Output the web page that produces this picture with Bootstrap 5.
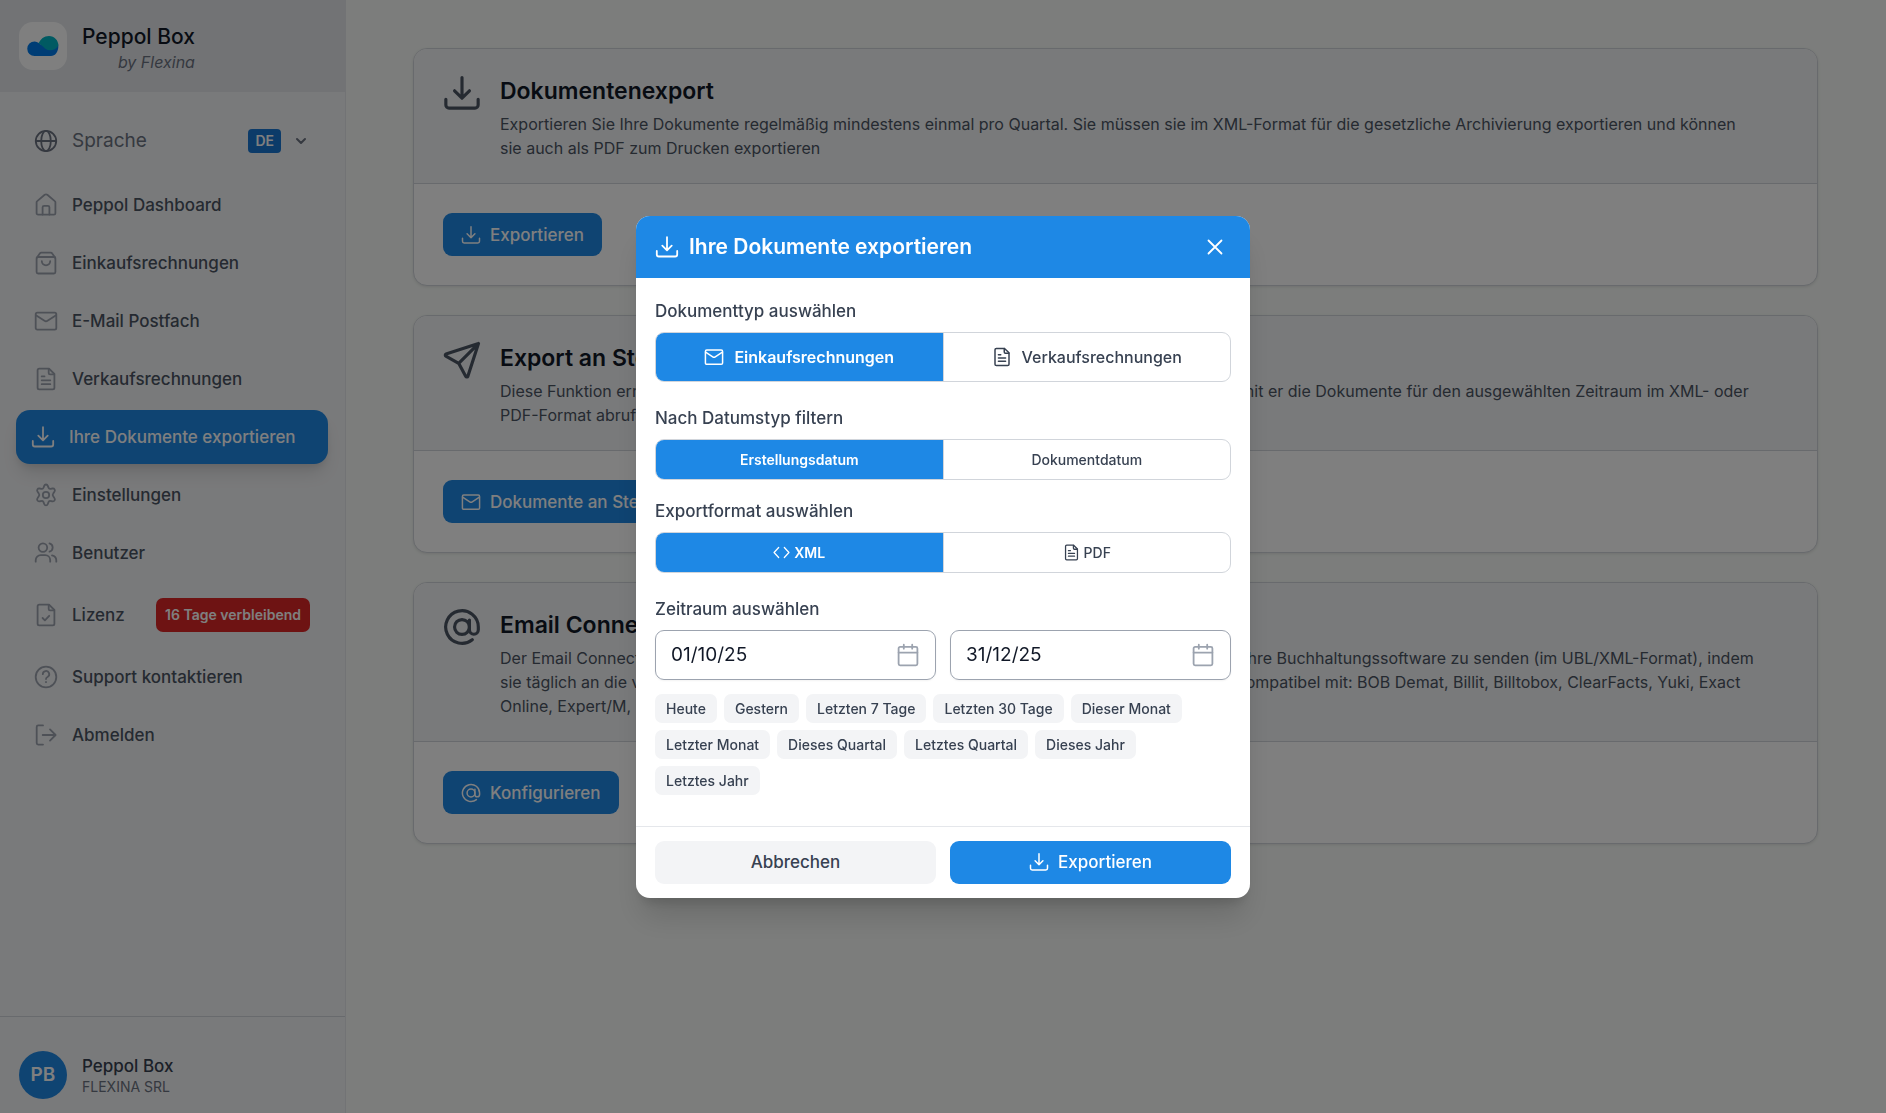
<!DOCTYPE html>
<html lang="de">
<head>
<meta charset="utf-8">
<meta name="viewport" content="width=device-width, initial-scale=1">
<title>Peppol Box</title>
<link href="https://cdn.jsdelivr.net/npm/bootstrap@5.3.0/dist/css/bootstrap.min.css" rel="stylesheet">
<style>
:root{--brand:#1e88e5;--ink:#111827;--g7:#374151;--g6:#4b5563;--g5:#6b7280;--g4:#9ca3af;--g3:#d1d5db;--g2:#e5e7eb;--g1:#f3f4f6}
body{font-family:Inter,sans-serif;font-size:17px;line-height:24px;background:#f8fbf8;color:var(--g6)}
svg{flex:none;fill:none;stroke:currentColor;stroke-width:1.8;stroke-linecap:round;stroke-linejoin:round}
.i16{width:17px;height:17px}.i18{width:20px;height:20px}.i24{width:24px;height:24px}.i38{width:38px;height:38px;stroke-width:2}
.side{width:346px;background:var(--g1);border-right:1px solid var(--g2)}
.side-head{background:var(--g2);height:92px;padding:0 19px;gap:15px}
.logo{width:48px;height:48px;border-radius:14px;background:#fff}
.logo svg{width:32px;height:22px;stroke:none}
.brand-name{font-size:21px;line-height:28px;font-weight:500;color:var(--ink)}
.by{color:var(--g5);font-size:16px;line-height:22px}
.lang{height:53px;padding:0 36px 0 34px;margin-top:22px;font-size:19px;color:var(--g5);background:none;border:0;gap:12px}
.lang-name{padding-left:2px}
.lang-code{background:#1976d2;color:#fff;font-size:14px;line-height:24px;font-weight:600;border-radius:4px;padding:0 7px}
.chev{width:16px;height:16px;stroke-width:3}
.menu{padding:11px 17px 11px 16px;gap:4px}
.menu .nav-link{height:54px;padding:0 18px;gap:14px;color:var(--g6);font-weight:500;border-radius:14px}
.menu svg{color:var(--g4)}
.menu .nav-link.active{background:var(--brand);color:#fff;padding:0 15px;box-shadow:0 12px 18px -4px rgba(0,0,0,.12),0 5px 7px -2px rgba(0,0,0,.08)}
.menu .active svg{color:#fff}
.menu .nav-link.tall{height:62px}
.days{background:#dc2626;color:#fff;font-size:14px;font-weight:600;line-height:24px;padding:5px 9px;border-radius:7px}
.side-foot{border-top:1px solid var(--g3);padding:34px 19px 14px;gap:15px}
.avatar{width:48px;height:48px;background:var(--brand);color:#fff;font-weight:600;font-size:19px}
.user{color:var(--g7);font-weight:500;line-height:22px}
.org{color:var(--g5);font-size:14px;line-height:19px}
main{padding:48px 68px 29px 67px;gap:29px}
.panel{border:1px solid var(--g3);border-radius:14px;box-shadow:0 1px 3px rgba(0,0,0,.1);overflow:hidden}
.panel-top{background:var(--g1);border-bottom:1px solid var(--g3);padding:25px 58px 23px 29px;gap:19px;color:var(--g6)}
.panel-top h2{font-size:23px;line-height:34px;font-weight:600;color:var(--ink);margin:0 0 4px}
.panel-top p{font-size:16px;margin:0}
.panel-body{padding:29px}
.act{height:43px;border-radius:9px;font-size:17px;font-weight:500;padding:0 18px;gap:9px;line-height:24px;border:0}
.act-main,.act-main:hover{background:var(--brand);color:#fff}
.act-grey{background:var(--g1);color:var(--g7)}
.dlg{max-width:614px}
.dlg .modal-content{border:0;border-radius:14px;overflow:hidden;box-shadow:0 24px 30px -6px rgba(0,0,0,.14),0 10px 12px -6px rgba(0,0,0,.14);color:var(--g7)}
.dlg .modal-header{background:var(--brand);color:#fff;height:62px;padding:0 19px;border:0;border-radius:0}
.dlg-title{gap:10px}
.dlg h1{font-size:21px;line-height:32px;font-weight:600;margin:0}
.dlg .modal-body{padding:21px 19px 31px}
.dlg fieldset{margin-bottom:24px}
.dlg fieldset.near{margin-bottom:19px}
.dlg legend{font-size:17px;line-height:24px;font-weight:500;margin-bottom:9px;color:var(--g7)}
.seg{border:1px solid var(--g3);border-radius:9px;overflow:hidden}
.seg .btn{border:0;border-radius:0!important;font-size:14px;line-height:23px;font-weight:500;color:var(--g7);padding:8px 0;flex:1 1 0;margin:0!important;gap:4px}
.seg.big .btn{font-size:16px;line-height:24px;padding:12px 0;gap:10px}
.seg .btn+.btn-check+.btn{border-left:1px solid var(--g3)}
.seg .btn-check:checked+.btn{background:var(--brand);color:#fff;font-weight:600}
.pair{gap:14px}
.pair>*{flex:1 1 0;min-width:0}
.datebox{border:1px solid var(--g4);border-radius:9px;height:50px;padding:0 15px;color:var(--g4);box-shadow:0 1px 2px rgba(0,0,0,.05)}
.datebox .form-control{border:0;padding:0;font-size:19px;line-height:28px;color:var(--ink);background:none;min-width:0}
.chips{gap:7px;margin-top:14px}
.chips button{border:0;background:var(--g1);color:var(--g7);border-radius:7px;font-size:14px;font-weight:500;line-height:19px;padding:5px 11px}
.dlg .modal-footer{border-top:1px solid var(--g2);padding:14px 19px}
.dlg .modal-footer>*{margin:0}
</style>
</head>
<body>
<svg class="d-none">
<symbol id="down" viewBox="0 0 24 24"><path d="M12 2.200v13M7.300 10.600l4.700 4.700 4.700-4.700M1.800 16v3.500a2 2 0 0 0 2 2h16.400a2 2 0 0 0 2-2V16"/></symbol>
<symbol id="globe" viewBox="0 0 24 24"><circle cx="12" cy="12" r="10.200"/><ellipse cx="12" cy="12" rx="4.800" ry="10.200"/><path d="M1.800 12h20.400"/></symbol>
<symbol id="home" viewBox="0 0 24 24"><path d="M2.600 9.300c0-.5.200-.9.600-1.200l7.500-6.300c.8-.6 1.800-.6 2.600 0l7.500 6.300c.4.300.6.700.6 1.200v10.900c0 .8-.6 1.500-1.500 1.500H4.100c-.9 0-1.500-.7-1.500-1.500z"/><path d="M8.600 21.500v-7.200c0-.8.600-1.500 1.500-1.500h3.800c.9 0 1.500.7 1.500 1.500v7.200"/></symbol>
<symbol id="bag" viewBox="0 0 24 24"><rect x="2.600" y="6" width="18.800" height="16.500" rx="1.500"/><path d="M2.800 6.800l3-4.300a1.800 1.800 0 0 1 1.500-.8h9.400c.6 0 1.200.3 1.500.8l3 4.300M7.800 10.100a4.200 4.200 0 0 0 8.400 0"/></symbol>
<symbol id="mail" viewBox="0 0 24 24"><rect x="1.700" y="3.700" width="20.600" height="17" rx="1.600"/><path d="M1.900 6.200l8.600 5.600c1 .7 2 .7 3 0l8.600-5.600"/></symbol>
<symbol id="doc" viewBox="0 0 24 24"><path d="M15 1.700H5.200c-.9 0-1.600.7-1.600 1.600v17.400c0 .9.700 1.600 1.600 1.600h13.600c.9 0 1.600-.7 1.600-1.600V7z"/><path d="M14.700 1.900V6c0 .8.600 1.400 1.400 1.400h4.100M7.700 9.400h2.800M7.700 13.300h8.600M7.700 17.200h8.600"/></symbol>
<symbol id="docok" viewBox="0 0 24 24"><path d="M15 1.700H5.200c-.9 0-1.600.7-1.600 1.600v17.400c0 .9.700 1.600 1.600 1.600h13.600c.9 0 1.600-.7 1.600-1.600V7z"/><path d="M14.700 1.900V6c0 .8.600 1.400 1.400 1.400h4.100M8.600 15l2.300 2.300 4.300-4.500"/></symbol>
<symbol id="gear" viewBox="0 0 24 24"><circle cx="12" cy="12" r="3.200"/><path d="M10.200 2.900c.7-1.900 2.900-1.900 3.600 0l.7 1.800c.3.800 1.200 1.300 2 1.100l2-.3c1.900-.3 3.100 1.700 1.900 3.200l-1.200 1.800c-.6.800-.6 2 0 2.800l1.200 1.700c1.200 1.600 0 3.600-1.900 3.300l-2-.3c-.8-.2-1.700.3-2 1.100l-.7 1.900c-.7 1.900-2.900 1.900-3.600 0l-.7-1.900c-.3-.8-1.200-1.300-2-1.100l-2 .3c-1.900.3-3.100-1.700-1.900-3.300l1.200-1.700c.6-.8.600-2 0-2.800L3.600 8.700c-1.200-1.500 0-3.500 1.900-3.200l2 .3c.8.200 1.700-.3 2-1.100z"/></symbol>
<symbol id="users" viewBox="0 0 24 24"><circle cx="8.900" cy="6.600" r="4.300"/><path d="M1.700 20.700v-1.500a5 5 0 0 1 5-5h4.500a5 5 0 0 1 5 5v1.500M15.500 2.400a4.300 4.300 0 0 1 0 8.300M18 14.400c2.600.6 4.300 2.500 4.300 5v1.300"/></symbol>
<symbol id="help" viewBox="0 0 24 24"><circle cx="12" cy="12" r="10.300"/><path d="M8.800 9.200a3.200 3.200 0 1 1 4.700 2.800c-.9.500-1.500 1.100-1.500 2M12 16.900v.3"/></symbol>
<symbol id="exit" viewBox="0 0 24 24"><path d="M9 21.600H4.200a1.500 1.500 0 0 1-1.500-1.500V3.900a1.500 1.500 0 0 1 1.500-1.500H9M8.700 12h12.800M16 6.400l5.600 5.600-5.600 5.600"/></symbol>
<symbol id="plane" viewBox="0 0 24 24"><path d="M22.400 1.600L1.900 8.200c-.6.200-.6 1-.1 1.300l8.100 4.600 4.500 8.300c.3.500 1.100.4 1.300-.1zM22.400 1.600L9.900 14.100"/></symbol>
<symbol id="at" viewBox="0 0 24 24"><circle cx="12" cy="12" r="4.700"/><path d="M16.700 7.600v6.200a2.800 2.800 0 0 0 5.600 0V12A10.300 10.300 0 1 0 18.500 20"/></symbol>
<symbol id="code" viewBox="0 0 24 24"><path d="M8 5L1.500 12 8 19M16 5l6.500 7-6.500 7"/></symbol>
<symbol id="cal" viewBox="0 0 24 24"><rect x="2.600" y="3.900" width="18.800" height="18.400" rx="1.500"/><path d="M2.600 9.600h18.800M7.800 1.700v4M16.200 1.700v4"/></symbol>
<symbol id="chev" viewBox="0 0 24 24"><path d="M6 9l6 6 6-6"/></symbol>
<symbol id="close" viewBox="0 0 24 24"><path d="M5.500 5.500l13 13M18.500 5.500l-13 13"/></symbol>
</svg>

<div class="d-flex min-vh-100">
  <aside class="side d-flex flex-column flex-shrink-0">
    <div class="side-head d-flex align-items-center">
      <div class="logo d-flex align-items-center justify-content-center">
        <svg viewBox="0 0 32 22"><path fill="#007aeb" d="M7.500 6.500c4 0 6.500 4 9 4L31 8c1.500 7-2 13-7 13H7.500a7.200 7.200 0 0 1 0-14.500z"/><path fill="#00b4c4" d="M11.500 8.500C13.500 4 17 1 22 1c5.500 0 9.500 4.500 9.300 9.500-2 3.500-5.300 5-8.800 4.800-5-.3-6.500-5.300-11-6.800z"/></svg>
      </div>
      <div class="text-end pt-1">
        <div class="brand-name">Peppol Box</div>
        <div class="by fst-italic">by Flexina</div>
      </div>
    </div>
    <button type="button" class="lang d-flex align-items-center text-start">
      <svg class="i24"><use href="#globe"/></svg><span class="lang-name flex-grow-1">Sprache</span>
      <span class="lang-code">DE</span><svg class="chev"><use href="#chev"/></svg>
    </button>
    <nav class="menu nav flex-column flex-nowrap flex-grow-1">
      <a class="nav-link d-flex align-items-center" href="#"><svg class="i24"><use href="#home"/></svg>Peppol Dashboard</a>
      <a class="nav-link d-flex align-items-center" href="#"><svg class="i24"><use href="#bag"/></svg>Einkaufsrechnungen</a>
      <a class="nav-link d-flex align-items-center" href="#"><svg class="i24"><use href="#mail"/></svg>E-Mail Postfach</a>
      <a class="nav-link d-flex align-items-center" href="#"><svg class="i24"><use href="#doc"/></svg>Verkaufsrechnungen</a>
      <a class="nav-link active d-flex align-items-center" href="#" aria-current="page"><svg class="i24"><use href="#down"/></svg>Ihre Dokumente exportieren</a>
      <a class="nav-link d-flex align-items-center" href="#"><svg class="i24"><use href="#gear"/></svg>Einstellungen</a>
      <a class="nav-link d-flex align-items-center" href="#"><svg class="i24"><use href="#users"/></svg>Benutzer</a>
      <a class="nav-link tall d-flex align-items-center" href="#"><svg class="i24"><use href="#docok"/></svg>Lizenz<span class="days ms-auto">16 Tage verbleibend</span></a>
      <a class="nav-link d-flex align-items-center" href="#"><svg class="i24"><use href="#help"/></svg>Support kontaktieren</a>
      <a class="nav-link d-flex align-items-center" href="#"><svg class="i24"><use href="#exit"/></svg>Abmelden</a>
    </nav>
    <div class="side-foot d-flex align-items-center">
      <div class="avatar rounded-circle d-flex align-items-center justify-content-center">PB</div>
      <div><div class="user">Peppol Box</div><div class="org">FLEXINA SRL</div></div>
    </div>
  </aside>

  <main class="d-flex flex-column flex-grow-1">
    <section class="panel bg-white">
      <div class="panel-top d-flex">
        <svg class="i38"><use href="#down"/></svg>
        <div><h2>Dokumentenexport</h2>
        <p>Exportieren Sie Ihre Dokumente regelmäßig mindestens einmal pro Quartal. Sie müssen sie im XML-Format für die gesetzliche Archivierung exportieren und können sie auch als PDF zum Drucken exportieren</p></div>
      </div>
      <div class="panel-body"><button type="button" class="btn act act-main d-inline-flex align-items-center"><svg class="i18"><use href="#down"/></svg>Exportieren</button></div>
    </section>
    <section class="panel bg-white">
      <div class="panel-top d-flex">
        <svg class="i38"><use href="#plane"/></svg>
        <div><h2>Export an Steuerberater</h2>
        <p>Diese Funktion ermöglicht es Ihnen, Ihrem Steuerberater eine E-Mail mit einem Link zu senden, damit er die Dokumente für den ausgewählten Zeitraum im XML- oder PDF-Format abrufen kann</p></div>
      </div>
      <div class="panel-body"><button type="button" class="btn act act-main d-inline-flex align-items-center"><svg class="i18"><use href="#mail"/></svg>Dokumente an Steuerberater</button></div>
    </section>
    <section class="panel bg-white">
      <div class="panel-top d-flex">
        <svg class="i38"><use href="#at"/></svg>
        <div><h2>Email Connector</h2>
        <p>Der Email Connector ermöglicht es Ihnen, Ihre Einkaufs- und Verkaufsrechnungen automatisch an Ihre Buchhaltungssoftware zu senden (im UBL/XML-Format), indem sie täglich an die von Ihnen konfigurierten E-Mail-Adressen dort automatisch übermittelt werden. Kompatibel mit: BOB Demat, Billit, Billtobox, ClearFacts, Yuki, Exact Online, Expert/M, Horus</p></div>
      </div>
      <div class="panel-body"><button type="button" class="btn act act-main d-inline-flex align-items-center"><svg class="i18"><use href="#at"/></svg>Konfigurieren</button></div>
    </section>
  </main>
</div>

<div class="modal-backdrop show"></div>
<div class="modal show d-block" role="dialog" aria-labelledby="dlgTitle">
  <div class="modal-dialog modal-dialog-centered dlg">
    <div class="modal-content">
      <div class="modal-header d-flex justify-content-between">
        <div class="dlg-title d-flex align-items-center"><svg class="i24"><use href="#down"/></svg><h1 id="dlgTitle">Ihre Dokumente exportieren</h1></div>
        <button type="button" class="btn p-1 border-0 text-white d-flex" aria-label="Schließen"><svg class="i24"><use href="#close"/></svg></button>
      </div>
      <div class="modal-body">
        <fieldset>
          <legend>Dokumenttyp auswählen</legend>
          <div class="seg big d-flex">
            <input class="btn-check" type="radio" name="kind" id="kindIn" checked><label class="btn d-flex align-items-center justify-content-center" for="kindIn"><svg class="i18"><use href="#mail"/></svg>Einkaufsrechnungen</label>
            <input class="btn-check" type="radio" name="kind" id="kindOut"><label class="btn d-flex align-items-center justify-content-center" for="kindOut"><svg class="i18"><use href="#doc"/></svg>Verkaufsrechnungen</label>
          </div>
        </fieldset>
        <fieldset class="near">
          <legend>Nach Datumstyp filtern</legend>
          <div class="seg d-flex">
            <input class="btn-check" type="radio" name="date" id="dateMade" checked><label class="btn d-flex align-items-center justify-content-center" for="dateMade">Erstellungsdatum</label>
            <input class="btn-check" type="radio" name="date" id="dateDoc"><label class="btn d-flex align-items-center justify-content-center" for="dateDoc">Dokumentdatum</label>
          </div>
        </fieldset>
        <fieldset>
          <legend>Exportformat auswählen</legend>
          <div class="seg d-flex">
            <input class="btn-check" type="radio" name="fmt" id="fmtXml" checked><label class="btn d-flex align-items-center justify-content-center" for="fmtXml"><svg class="i16"><use href="#code"/></svg>XML</label>
            <input class="btn-check" type="radio" name="fmt" id="fmtPdf"><label class="btn d-flex align-items-center justify-content-center" for="fmtPdf"><svg class="i16"><use href="#doc"/></svg>PDF</label>
          </div>
        </fieldset>
        <fieldset class="m-0">
          <legend>Zeitraum auswählen</legend>
          <div class="pair d-flex">
            <div class="datebox d-flex align-items-center"><input class="form-control" type="text" value="01/10/25" aria-label="Von"><svg class="i24"><use href="#cal"/></svg></div>
            <div class="datebox d-flex align-items-center"><input class="form-control" type="text" value="31/12/25" aria-label="Bis"><svg class="i24"><use href="#cal"/></svg></div>
          </div>
          <div class="chips d-flex flex-wrap">
            <button type="button">Heute</button><button type="button">Gestern</button><button type="button">Letzten 7 Tage</button><button type="button">Letzten 30 Tage</button><button type="button">Dieser Monat</button><button type="button">Letzter Monat</button><button type="button">Dieses Quartal</button><button type="button">Letztes Quartal</button><button type="button">Dieses Jahr</button><button type="button">Letztes Jahr</button>
          </div>
        </fieldset>
      </div>
      <div class="modal-footer pair d-flex flex-nowrap">
        <button type="button" class="btn act act-grey">Abbrechen</button>
        <button type="button" class="btn act act-main d-flex align-items-center justify-content-center"><svg class="i18"><use href="#down"/></svg>Exportieren</button>
      </div>
    </div>
  </div>
</div>
<script src="https://cdn.jsdelivr.net/npm/bootstrap@5.3.0/dist/js/bootstrap.bundle.min.js"></script>
</body>
</html>
